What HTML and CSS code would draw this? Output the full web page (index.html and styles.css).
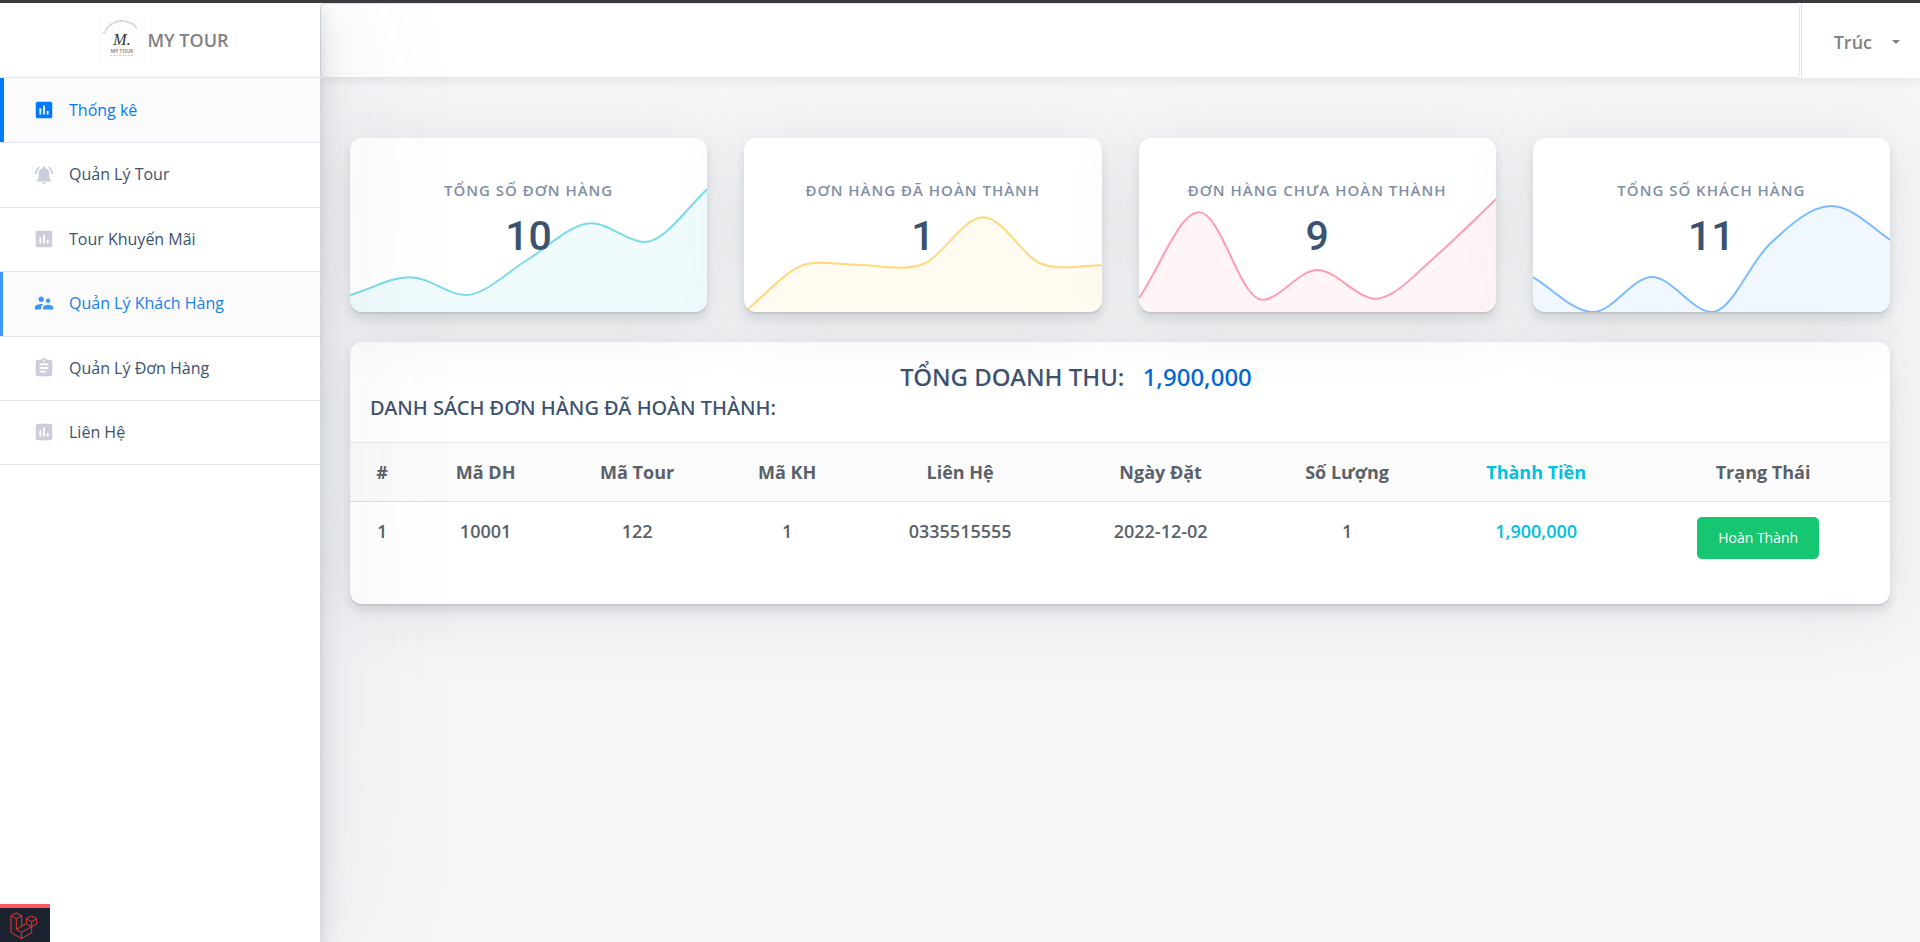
FILE: index.html
```html
<!DOCTYPE html>
<html lang="vi">
<head>
<meta charset="utf-8">
<title>My Tour - Thống kê</title>
<link rel="stylesheet" href="styles.css">
</head>
<body>
<svg class="symbols" aria-hidden="true">
  <symbol id="i-chart" viewBox="0 0 24 24"><path d="M19 3H5c-1.1 0-2 .9-2 2v14c0 1.100.9 2 2 2h14c1.100 0 2-.9 2-2V5c0-1.100-.9-2-2-2zM9 17H7v-7h2v7zm4 0h-2V7h2v10zm4 0h-2v-4h2v4z"/></symbol>
  <symbol id="i-bell" viewBox="0 0 24 24"><path d="M7.580 4.080L6.150 2.650C3.750 4.480 2.170 7.300 2.030 10.500h2c.150-2.650 1.510-4.970 3.550-6.420zM19.970 10.500h2c-.150-3.200-1.730-6.020-4.120-7.850l-1.420 1.430c2.020 1.450 3.390 3.770 3.540 6.420zM18 11c0-3.070-1.640-5.640-4.500-6.320V4c0-.830-.670-1.500-1.500-1.500s-1.500.670-1.500 1.500v.680C7.630 5.360 6 7.920 6 11v5l-2 2v1h16v-1l-2-2v-5zM12 22c.140 0 .270-.010.400-.040.650-.140 1.180-.580 1.440-1.180.100-.240.150-.500.150-.780h-4c.010 1.100.9 2 2.010 2z"/></symbol>
  <symbol id="i-people" viewBox="0 0 24 24"><path d="M16.500 12c1.380 0 2.490-1.120 2.490-2.500S17.880 7 16.500 7 14 8.120 14 9.500s1.120 2.500 2.500 2.500zM9 11c1.660 0 2.990-1.340 2.990-3S10.660 5 9 5 6 6.340 6 8s1.340 3 3 3zm7.500 3c-1.830 0-5.500.920-5.500 2.750V19h11v-2.250c0-1.830-3.670-2.750-5.500-2.750zM9 13c-2.330 0-7 1.170-7 3.500V19h7v-2.250c0-.850.330-2.340 2.370-3.470C10.500 13.100 9.660 13 9 13z"/></symbol>
  <symbol id="i-list" viewBox="0 0 24 24"><path d="M19 3h-4.180C14.400 1.840 13.300 1 12 1s-2.400.840-2.820 2H5c-1.100 0-2 .9-2 2v14c0 1.100.9 2 2 2h14c1.100 0 2-.9 2-2V5c0-1.100-.9-2-2-2zm-7 0c.550 0 1 .450 1 1s-.450 1-1 1-1-.450-1-1 .450-1 1-1zm2 14H7v-2h7v2zm3-4H7v-2h10v2zm0-4H7V7h10v2z"/></symbol>
</svg>

<div class="layout">
  <aside class="sidebar">
    <a class="brand" href="#">
      <svg class="brand-logo" viewBox="0 0 49 49" role="img" aria-label="My Tour">
        <rect width="49" height="49" fill="#fdfdfd"/>
        <path id="arc" d="M7 18A18 18 0 0 1 41 18" fill="none"/>
        <text class="logo-arc"><textPath href="#arc">Travel for all the travellers</textPath></text>
        <text class="logo-mark" x="24" y="29">M.</text>
        <text class="logo-name" x="24" y="37">MY TOUR</text>
        <path d="M12 39.500H36" stroke="#ccc" stroke-width="1" stroke-dasharray="2 1"/>
      </svg>
      <span>MY TOUR</span>
    </a>
    <nav class="menu">
      <a class="menu-item active" href="#"><svg class="icon"><use href="#i-chart"/></svg>Thống kê</a>
      <a class="menu-item" href="#"><svg class="icon"><use href="#i-bell"/></svg>Quản Lý Tour</a>
      <a class="menu-item" href="#"><svg class="icon"><use href="#i-chart"/></svg>Tour Khuyến Mãi</a>
      <a class="menu-item hovered" href="#"><svg class="icon"><use href="#i-people"/></svg>Quản Lý Khách Hàng</a>
      <a class="menu-item" href="#"><svg class="icon"><use href="#i-list"/></svg>Quản Lý Đơn Hàng</a>
      <a class="menu-item" href="#"><svg class="icon"><use href="#i-chart"/></svg>Liên Hệ</a>
    </nav>
  </aside>

  <div class="page">
    <header class="topbar">
      <input class="search" type="text" aria-label="Tìm kiếm">
      <button class="user" type="button">Trúc<span class="caret"></span></button>
    </header>

    <main class="content">
      <section class="stats">
        <article class="card stat teal">
          <svg class="spark" viewBox="0 0 357 174" preserveAspectRatio="none">
            <path class="area" d="M0 157C24 150 40 139 59.500 139.300C80 139 97 157 116 157C135 157 157 134 177 122C197 110 221 85 241 85.300C258 85 278 104 294 104C314 104 334 73 357 51V174H0z"/>
            <path class="line" d="M0 157C24 150 40 139 59.500 139.300C80 139 97 157 116 157C135 157 157 134 177 122C197 110 221 85 241 85.300C258 85 278 104 294 104C314 104 334 73 357 51"/>
          </svg>
          <h2 class="stat-label">Tổng số đơn hàng</h2>
          <p class="stat-value">10</p>
        </article>
        <article class="card stat yellow">
          <svg class="spark" viewBox="0 0 357 174" preserveAspectRatio="none">
            <path class="area" d="M0 174C20 159 43 130 63 126C78 122 98 127 119 127C139 128 162 133 179 126C199 118 219 79 239 79.300C259 79 279 120 298 126C313 132 337 128 357 127V174H0z"/>
            <path class="line" d="M0 174C20 159 43 130 63 126C78 122 98 127 119 127C139 128 162 133 179 126C199 118 219 79 239 79.300C259 79 279 120 298 126C313 132 337 128 357 127"/>
          </svg>
          <h2 class="stat-label">Đơn hàng đã hoàn thành</h2>
          <p class="stat-value">1</p>
        </article>
        <article class="card stat pink">
          <svg class="spark" viewBox="0 0 357 174" preserveAspectRatio="none">
            <path class="area" d="M0 160C20 132 40 74 60 74.300C82 74 101 161.700 123 161.700C140 162 160 132 178 132C197 132 218 161 237 160.700C256 160 277 135 298 117C318 99 337 80 357 61V174H0z"/>
            <path class="line" d="M0 160C20 132 40 74 60 74.300C82 74 101 161.700 123 161.700C140 162 160 132 178 132C197 132 218 161 237 160.700C256 160 277 135 298 117C318 99 337 80 357 61"/>
          </svg>
          <h2 class="stat-label">Đơn hàng chưa hoàn thành</h2>
          <p class="stat-value">9</p>
        </article>
        <article class="card stat blue">
          <svg class="spark" viewBox="0 0 357 174" preserveAspectRatio="none">
            <path class="area" d="M0 139C20 151 40 174 60 174C80 174 99 139 119 139C139 139 159 174 179 174C199 174 218 121 239 103.700C258 86 278 68 298 68C318 68 337 88 357 102V174H0z"/>
            <path class="line" d="M0 139C20 151 40 174 60 174C80 174 99 139 119 139C139 139 159 174 179 174C199 174 218 121 239 103.700C258 86 278 68 298 68C318 68 337 88 357 102"/>
          </svg>
          <h2 class="stat-label">Tổng số khách hàng</h2>
          <p class="stat-value">11</p>
        </article>
      </section>

      <section class="card orders">
        <div class="orders-head">
          <h1 class="revenue">TỔNG DOANH THU: <span class="revenue-value">1,900,000</span></h1>
          <h2 class="orders-title">DANH SÁCH ĐƠN HÀNG ĐÃ HOÀN THÀNH:</h2>
        </div>
        <table class="orders-table">
          <colgroup>
            <col class="c-index"><col class="c-order"><col class="c-tour"><col class="c-customer"><col class="c-phone"><col class="c-date"><col class="c-qty"><col class="c-total"><col class="c-status">
          </colgroup>
          <thead>
            <tr><th>#</th><th>Mã DH</th><th>Mã Tour</th><th>Mã KH</th><th>Liên Hệ</th><th>Ngày Đặt</th><th>Số Lượng</th><th class="total">Thành Tiền</th><th>Trạng Thái</th></tr>
          </thead>
          <tbody>
            <tr><td>1</td><td>10001</td><td>122</td><td>1</td><td>0335515555</td><td>2022-12-02</td><td>1</td><td class="total">1,900,000</td><td class="status"><button class="done" type="button">Hoàn Thành</button></td></tr>
          </tbody>
        </table>
      </section>
    </main>
  </div>
</div>

<button class="debugbar" type="button" aria-label="Laravel Debugbar">
  <svg viewBox="0 0 150 102" class="debug-logo"><path d="M33 23L49 15L65 23L49 32ZM33 23V73L64 92L95 74V56M49 32V64L64 73V92M65 23V55L49 64M64 73L95 56M65 55L79 47M79 32L95 24L110 32L95 41ZM79 32V47L95 56L110 48V32M95 41V56"/></svg>
</button>
</body>
</html>
```

FILE: styles.css
```css
* { box-sizing: border-box; }

body {
  margin: 0;
  border-top: 3px solid #3b3b3f;
  background: #f5f6f8;
  color: #5a6169;
  font-family: "Open Sans", "Noto Sans", sans-serif;
  font-size: 16px;
}

h1, h2, p { margin: 0; font-weight: 500; }
a { color: inherit; text-decoration: none; }
button, input { font-family: inherit; }
.symbols { display: none; }

.layout {
  display: grid;
  grid-template-columns: 1fr 5fr;
  min-height: calc(100vh - 3px);
}

/* Sidebar */
.sidebar {
  position: relative;
  z-index: 2;
  background: #fff;
  box-shadow: 0 2px 150px rgba(90, 97, 105, .1), 0 4px 8px rgba(90, 97, 105, .12), 0 15px 22px rgba(90, 97, 105, .1), 0 7px 35px rgba(90, 97, 105, .1);
}
.brand {
  display: flex;
  justify-content: center;
  align-items: center;
  height: 75px;
  padding: 0 0 0 7px;
  border-bottom: 1px solid #e1e5eb;
  color: #818181;
  font-size: 18px;
  font-weight: 600;
}
.brand-logo { width: 49px; height: 49px; }
.logo-arc { font-size: 3px; fill: #999; }
.logo-mark { font: italic 16px "Liberation Serif", serif; fill: #333; text-anchor: middle; }
.logo-name { font-size: 5px; fill: #777; text-anchor: middle; }

.menu-item {
  display: flex;
  align-items: center;
  gap: 13px;
  padding: 20px 32px 21px;
  border-bottom: 1px solid #e1e5eb;
  color: #3d5170;
  font-size: 16px;
  font-weight: 400;
  line-height: 1.4;
}
.menu-item:first-child { padding-top: 21px; }
.icon { width: 24px; height: 22px; overflow: visible; fill: #cacedb; }
.menu-item.active { background: #fbfbfb; box-shadow: inset 4px 0 #007bff; color: #007bff; }
.menu-item.active .icon { fill: #007bff; }
.menu-item.hovered { background: #fbfbfb; box-shadow: inset 3px 0 #3f97fb; color: #1a7fe8; }
.menu-item.hovered .icon { fill: #3f97fb; }

/* Top bar */
.topbar {
  display: flex;
  gap: 1px;
  height: 75px;
  background: #fff;
  box-shadow: 0 2px 10px rgba(90, 97, 105, .12);
}
.search {
  flex: 1;
  min-width: 0;
  border: 1px solid #e1e5eb;
  border-radius: 5px;
  background: #fff;
  padding: 0 16px;
}
.user {
  display: flex;
  align-items: center;
  gap: 20px;
  padding: 2px 20px 0 32px;
  border: 0;
  border-left: 1px solid #e1e5eb;
  background: #fff;
  color: #818181;
  font-size: 18px;
  font-weight: 600;
}
.caret { border: 4px solid transparent; border-top-color: #818181; border-bottom: 0; }

/* Content */
.content { display: grid; gap: 30px; padding: 60px 30px; }
.card {
  border-radius: 12px;
  background: #fff;
  box-shadow: 0 2px 0 rgba(90, 97, 105, .11), 0 4px 8px rgba(90, 97, 105, .12), 0 10px 10px rgba(90, 97, 105, .06), 0 7px 70px rgba(90, 97, 105, .13);
}
.stats { display: grid; grid-template-columns: repeat(4, 1fr); gap: 37px; }
.stat {
  position: relative;
  min-height: 174px;
  padding: 42px 16px 0;
  overflow: hidden;
  text-align: center;
}
.spark { position: absolute; inset: 0; width: 100%; height: 100%; }
.line { fill: none; stroke: currentColor; stroke-width: 2; opacity: .5; }
.area { fill: currentColor; opacity: .06; }
.teal { color: #00b8d8; }
.yellow { color: #ffb400; }
.pink { color: #ff4169; }
.blue { color: #007bff; }
.stat-label {
  position: relative;
  color: #818ea3;
  font-size: 15px;
  font-weight: 600;
  line-height: 20px;
  letter-spacing: 1px;
  text-transform: uppercase;
}
.stat-value {
  position: relative;
  margin-top: 12px;
  color: #3d5170;
  font-family: Roboto, sans-serif;
  font-size: 41px;
  font-weight: 500;
  line-height: 48px;
}

.orders { overflow: hidden; padding-bottom: 45px; }
.orders-head {
  padding: 18px 20px 21px;
  border-bottom: 1px solid #e1e5eb;
  color: #3d5170;
  font-family: "Noto Sans", "Open Sans", sans-serif;
}
.revenue { padding-right: 88px; font-size: 24px; line-height: 34px; text-align: center; }
.revenue-value { margin-left: 12px; color: #0067d6; }
.orders-title { font-size: 20px; line-height: 27px; }
.orders-table { width: 100%; table-layout: fixed; border-collapse: collapse; text-align: center; font-size: 18px; }
.orders-table th {
  padding: 17px 0;
  border-bottom: 1px solid #dee2e6;
  background: #fbfbfb;
  font-weight: 700;
  line-height: 24px;
}
.orders-table td { padding: 15px 0 0; font-weight: 600; line-height: 28px; vertical-align: top; }
.orders-table .total { color: #00c1de; }
.c-index { width: 4.160%; }
.c-order { width: 9.290%; }
.c-tour { width: 10.390%; }
.c-customer { width: 9.090%; }
.c-phone { width: 13.380%; }
.c-date { width: 12.660%; }
.c-qty { width: 11.560%; }
.c-total { width: 12.990%; }
.done {
  display: block;
  margin: 0 auto 0 61px;
  padding: 0 21px;
  border: 0;
  border-radius: 5px;
  background: #17c671;
  color: #fff;
  font-size: 14px;
  line-height: 42px;
}

.debugbar {
  position: fixed;
  left: 0;
  bottom: 0;
  z-index: 3;
  width: 50px;
  height: 38px;
  padding: 0;
  border: 0;
  border-top: 4px solid #ff5661;
  background: #1b2330;
}
.debug-logo { display: block; width: 50px; height: 34px; fill: none; stroke: #e8352b; stroke-width: 3; stroke-linejoin: round; }
```
